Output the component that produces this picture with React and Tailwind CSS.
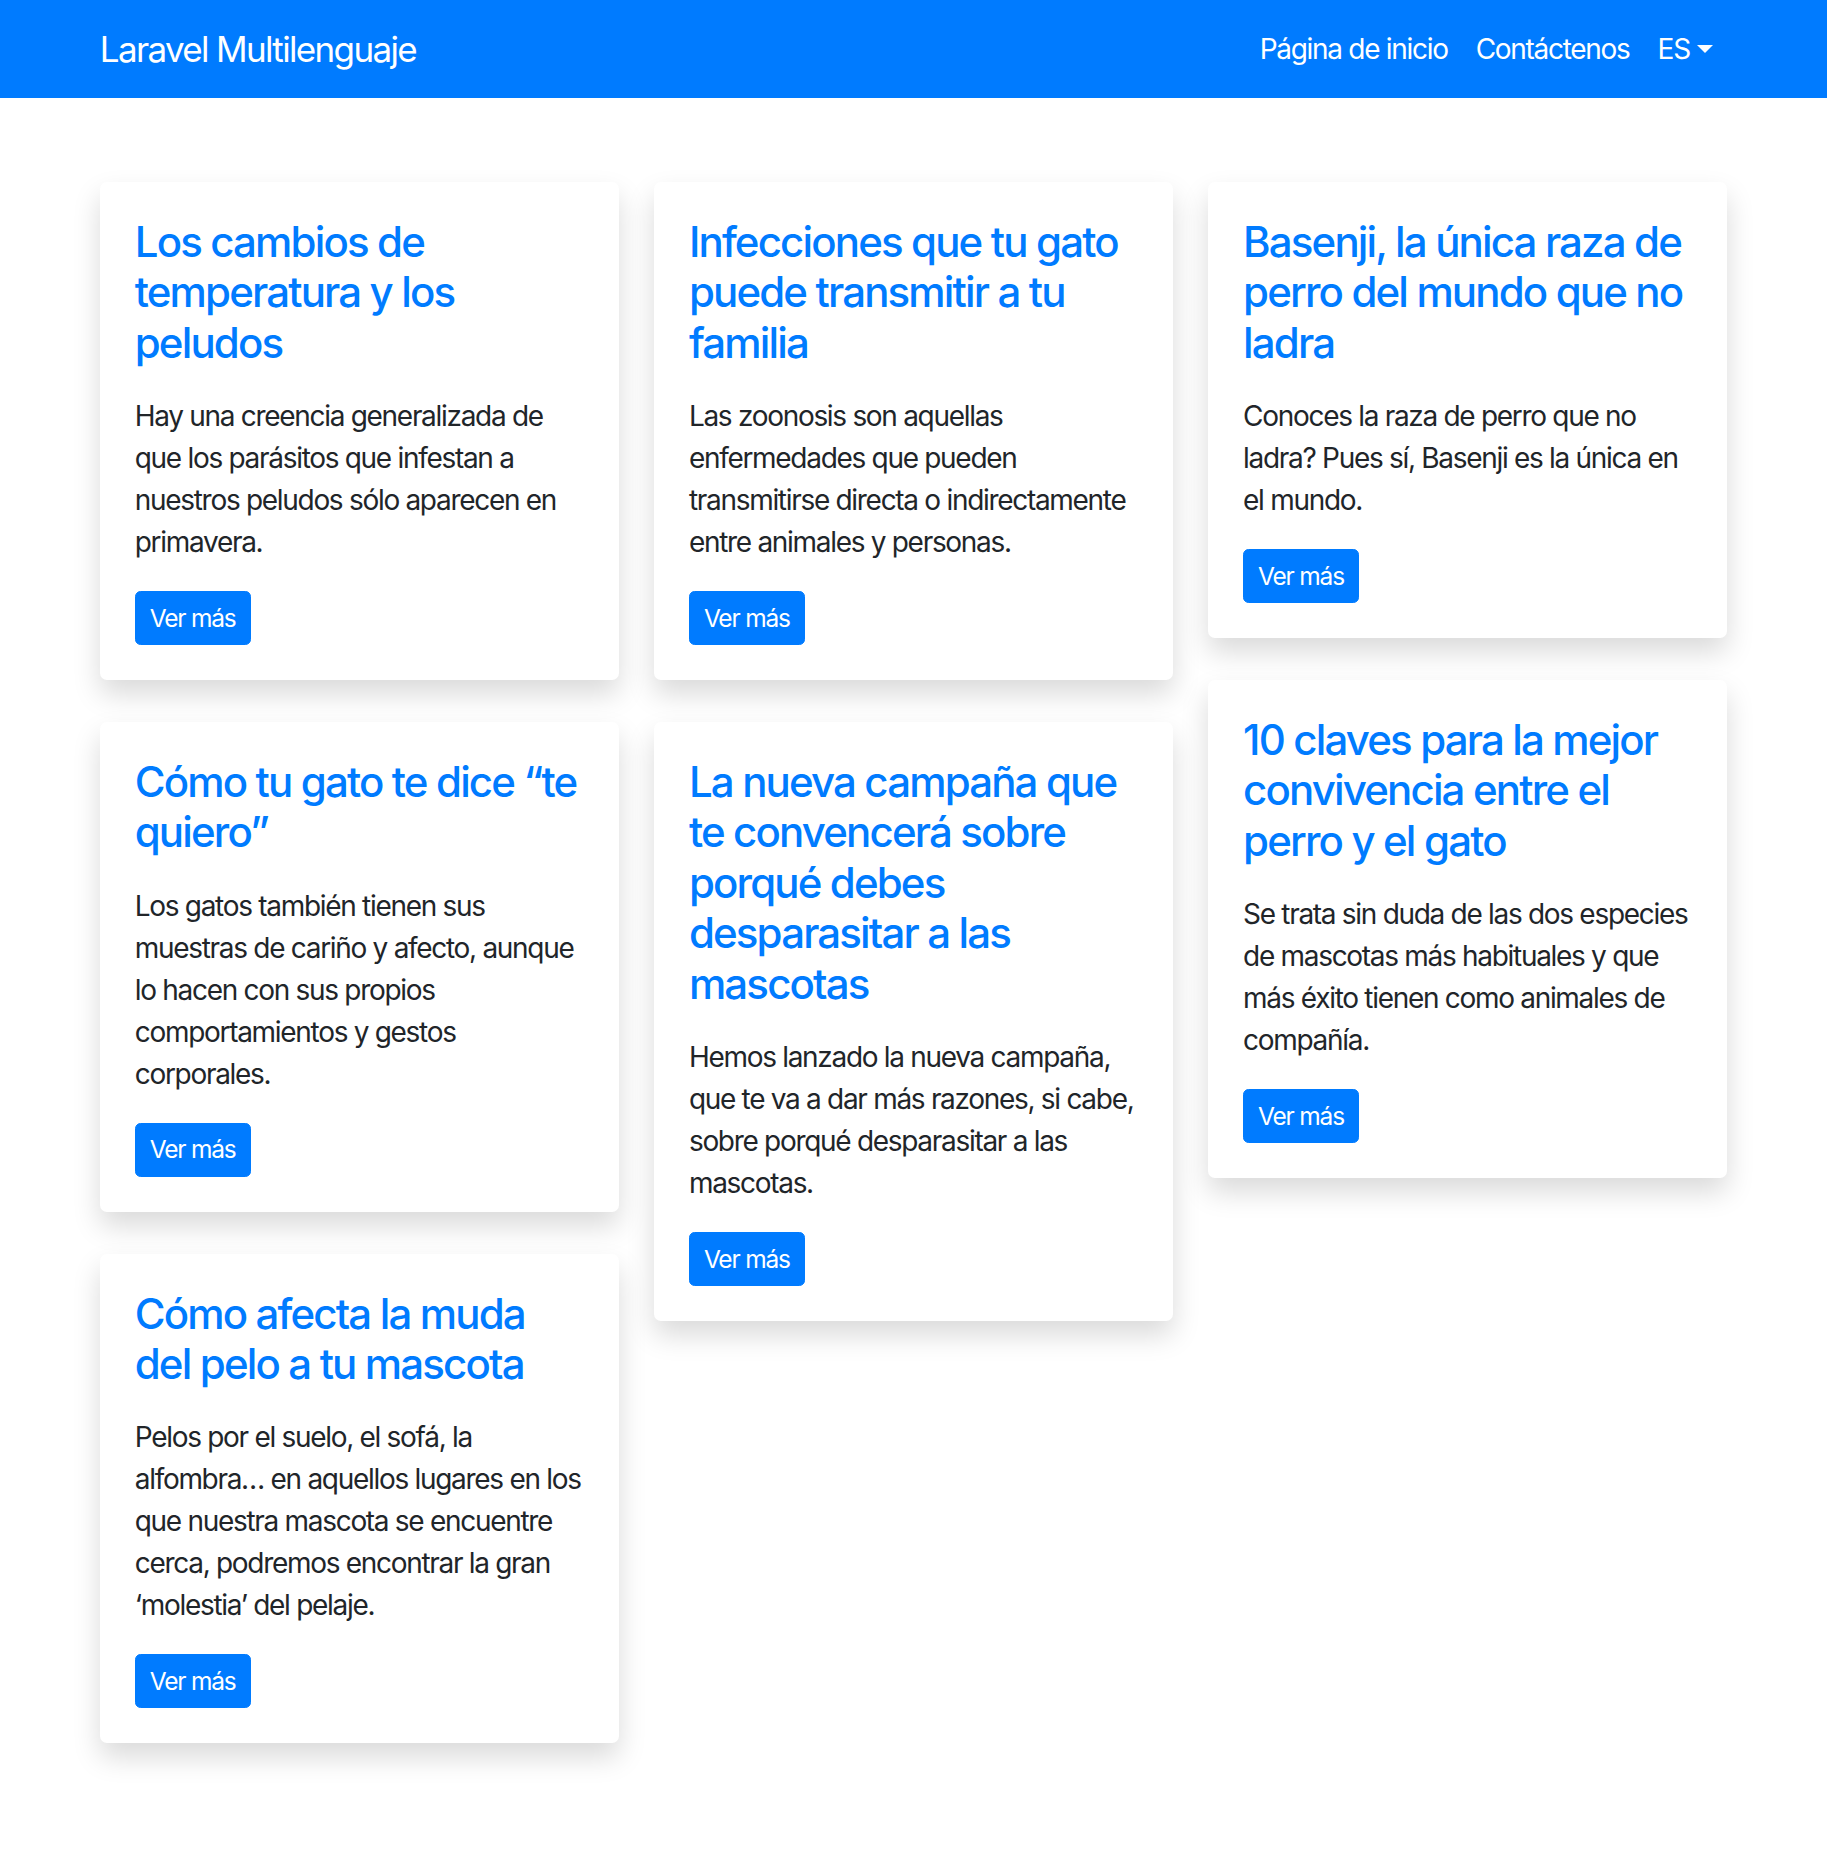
const posts = [
  {
    title: ['Los cambios de', 'temperatura y los', 'peludos'],
    body: ['Hay una creencia generalizada de', 'que los parásitos que infestan a', 'nuestros peludos sólo aparecen en', 'primavera.'],
  },
  {
    title: ['Infecciones que tu gato', 'puede transmitir a tu', 'familia'],
    body: ['Las zoonosis son aquellas', 'enfermedades que pueden', 'transmitirse directa o indirectamente', 'entre animales y personas.'],
  },
  {
    title: ['Basenji, la única raza de', 'perro del mundo que no', 'ladra'],
    body: ['Conoces la raza de perro que no', 'ladra? Pues sí, Basenji es la única en', 'el mundo.'],
  },
  {
    title: ['Cómo tu gato te dice “te', 'quiero”'],
    body: ['Los gatos también tienen sus', 'muestras de cariño y afecto, aunque', 'lo hacen con sus propios', 'comportamientos y gestos', 'corporales.'],
  },
  {
    title: ['La nueva campaña que', 'te convencerá sobre', 'porqué debes', 'desparasitar a las', 'mascotas'],
    body: ['Hemos lanzado la nueva campaña,', 'que te va a dar más razones, si cabe,', 'sobre porqué desparasitar a las', 'mascotas.'],
  },
  {
    title: ['10 claves para la mejor', 'convivencia entre el', 'perro y el gato'],
    body: ['Se trata sin duda de las dos especies', 'de mascotas más habituales y que', 'más éxito tienen como animales de', 'compañía.'],
  },
  {
    title: ['Cómo afecta la muda', 'del pelo a tu mascota'],
    body: ['Pelos por el suelo, el sofá, la', 'alfombra… en aquellos lugares en los', 'que nuestra mascota se encuentre', 'cerca, podremos encontrar la gran', '‘molestia’ del pelaje.'],
  },
];

const columns = [[0, 3, 6], [1, 4], [2, 5]];

function PostCard({ post }) {
  return (
    <div className="bg-white rounded-[7px] shadow-[0_14px_28px_rgba(0,0,0,0.15)] p-[35px]">
      <h4 className="text-[42px] leading-[50.4px] font-medium text-[#007bff] mb-[27px] tracking-[-1.85px]">
        {post.title.map((line, i) => (
          <span key={i} className="block whitespace-nowrap">{line}</span>
        ))}
      </h4>
      <p className="text-[28px] leading-[42px] text-[#212529] mb-[28px] tracking-[-1.3px]">
        {post.body.map((line, i) => (
          <span key={i} className="block whitespace-nowrap">{line}</span>
        ))}
      </p>
      <a href="#" className="inline-block bg-[#007bff] border border-[#007bff] text-white text-[24.5px] leading-[36.75px] px-[14px] py-[7.5px] rounded-[5.6px] tracking-[-1.2px]">
        Ver más
      </a>
    </div>
  );
}

export default function App() {
  return (
    <div className="min-h-[1869px] bg-white font-['Inter','Liberation_Sans',sans-serif] antialiased">
      <nav className="bg-[#007bff] py-[14px]">
        <div className="w-[1680px] mx-auto px-[26.25px] flex items-center justify-between">
          <a href="#" className="text-white text-[35px] leading-[52.5px] py-[8.75px] tracking-[-1.65px]">
            Laravel Multilenguaje
          </a>
          <ul className="flex items-center">
            <li>
              <a href="#" className="block text-white text-[28px] leading-[42px] p-[14px] tracking-[-1.3px]">Página de inicio</a>
            </li>
            <li>
              <a href="#" className="block text-white text-[28px] leading-[42px] p-[14px] tracking-[-1.3px]">Contáctenos</a>
            </li>
            <li>
              <a href="#" className="flex items-center text-white text-[28px] leading-[42px] p-[14px] tracking-[-1px]">
                ES
                <span className="ml-[7px] w-0 h-0 border-t-[8.4px] border-t-white border-x-[8.4px] border-x-transparent"></span>
              </a>
            </li>
          </ul>
        </div>
      </nav>

      <div className="w-[1680px] mx-auto px-[26.25px] mt-[84px]">
        <div className="grid grid-cols-3 gap-x-[35px] items-start">
          {columns.map((col, ci) => (
            <div key={ci} className="flex flex-col gap-[42px]">
              {col.map((idx) => (
                <PostCard key={idx} post={posts[idx]} />
              ))}
            </div>
          ))}
        </div>
      </div>
    </div>
  );
}
